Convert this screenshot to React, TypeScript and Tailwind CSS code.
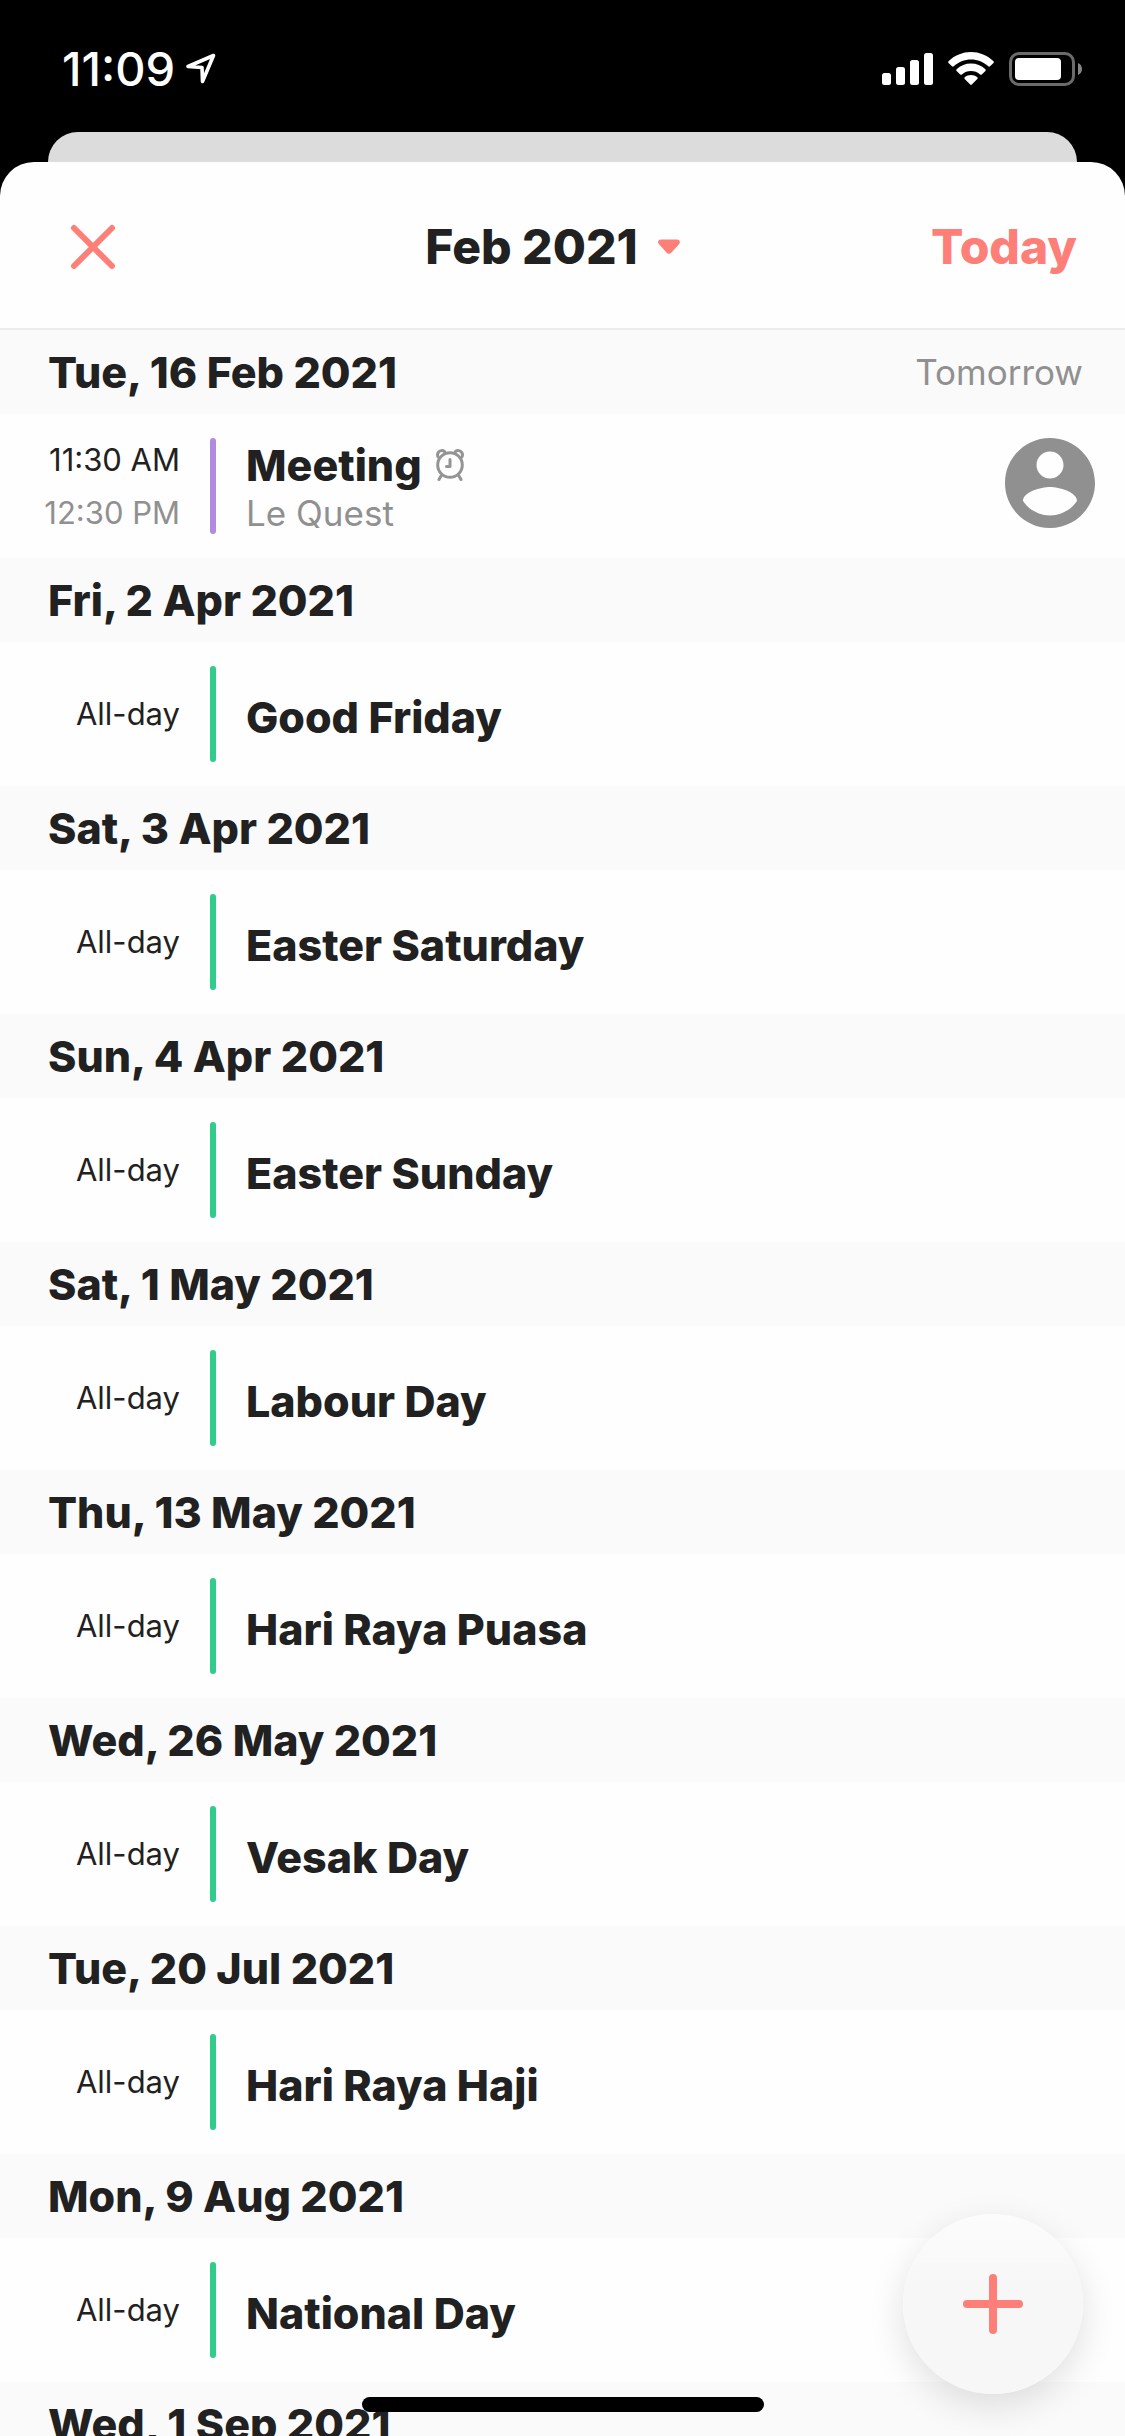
import React from "react";

type Event = {
  date: string;
  note?: string;
  start: string;
  end?: string;
  title: string;
  place?: string;
  alarm?: boolean;
  avatar?: boolean;
};

const events: Event[] = [
  { date: "Tue, 16 Feb 2021", note: "Tomorrow", start: "11:30 AM", end: "12:30 PM", title: "Meeting", place: "Le Quest", alarm: true, avatar: true },
  { date: "Fri, 2 Apr 2021", start: "All-day", title: "Good Friday" },
  { date: "Sat, 3 Apr 2021", start: "All-day", title: "Easter Saturday" },
  { date: "Sun, 4 Apr 2021", start: "All-day", title: "Easter Sunday" },
  { date: "Sat, 1 May 2021", start: "All-day", title: "Labour Day" },
  { date: "Thu, 13 May 2021", start: "All-day", title: "Hari Raya Puasa" },
  { date: "Wed, 26 May 2021", start: "All-day", title: "Vesak Day" },
  { date: "Tue, 20 Jul 2021", start: "All-day", title: "Hari Raya Haji" },
  { date: "Mon, 9 Aug 2021", start: "All-day", title: "National Day" },
];

function StatusBar() {
  return (
    <div className="flex h-[132px] shrink-0 items-center justify-between pt-[6px] pr-[43px] pl-[62px] text-white">
      <div className="flex items-center gap-[10px]">
        <span className="text-[47px] leading-[54px] font-medium">11:09</span>
        <svg aria-label="Location" className="size-[32px]" viewBox="0 0 32 32" fill="none" stroke="currentColor" strokeWidth="3.6" strokeLinejoin="round">
          <path d="M3 13.500L28.500 2.500L17.500 28.500L17 14.500Z" />
        </svg>
      </div>
      <div className="flex items-center gap-[15px]">
        <svg aria-label="Signal" className="h-[34px] w-[51px]" viewBox="0 0 51 34" fill="currentColor">
          <rect x="0" y="21" width="9" height="12" rx="2.5" />
          <rect x="14" y="15" width="9" height="18" rx="2.5" />
          <rect x="28" y="8" width="9" height="25" rx="2.5" />
          <rect x="42" y="1" width="9" height="32" rx="2.5" />
        </svg>
        <svg aria-label="Wi-Fi" className="h-[34px] w-[46px]" viewBox="0 0 46 34" fill="currentColor">
          <path d="M23 0C14.5 0 6.500 3.400 0.500 9.200C0 9.700 0 10.400 0.500 10.900L4 14.300C4.500 14.800 5.200 14.800 5.700 14.300C10.400 9.900 16.500 7.500 23 7.500C29.500 7.500 35.600 9.900 40.300 14.300C40.800 14.800 41.500 14.800 42 14.300L45.500 10.900C46 10.400 46 9.700 45.500 9.200C39.500 3.400 31.500 0 23 0Z" />
          <path d="M23 11.500C17.600 11.500 12.500 13.500 8.600 17.200C8.100 17.700 8.100 18.400 8.600 18.900L12.200 22.400C12.700 22.900 13.400 22.900 13.900 22.400C16.400 20.200 19.600 19 23 19C26.400 19 29.600 20.200 32.100 22.400C32.600 22.900 33.300 22.900 33.800 22.400L37.400 18.900C37.900 18.400 37.900 17.700 37.400 17.200C33.500 13.500 28.400 11.500 23 11.500Z" />
          <path d="M23 23C20.700 23 18.500 23.800 16.700 25.200C16.200 25.700 16.200 26.400 16.700 26.900L22.200 32.500C22.700 33 23.300 33 23.800 32.500L29.300 26.900C29.800 26.400 29.800 25.700 29.300 25.200C27.500 23.800 25.300 23 23 23Z" />
        </svg>
        <svg aria-label="Battery" className="h-[34px] w-[73px]" viewBox="0 0 73 34">
          <rect x="1.500" y="1.500" width="63" height="31" rx="8.500" fill="none" stroke="#6b6b6b" strokeWidth="3" />
          <rect x="6" y="6" width="46" height="22" rx="4" fill="#fff" />
          <path d="M69 11C71.500 12 73 14.300 73 17C73 19.700 71.500 22 69 23Z" fill="#858585" />
        </svg>
      </div>
    </div>
  );
}

function AlarmIcon() {
  return (
    <svg aria-label="Alarm" className="h-[32px] w-[28px]" viewBox="0 0 28 32" fill="none" stroke="#949494" strokeWidth="3" strokeLinecap="round" strokeLinejoin="round">
      <circle cx="14" cy="16" r="12.300" />
      <path d="M14 10.500V17.500H10.500M5 27L3 30.500M23 27L25 30.500" />
      <path d="M2 8C0.500 4.500 3 1.500 6 1.500C7.500 1.500 8.500 2 9 3.500M26 8C27.500 4.500 25 1.500 22 1.500C20.500 1.500 19.500 2 19 3.500" />
    </svg>
  );
}

function Avatar() {
  return (
    <svg aria-label="Attendee" className="mt-6 size-[90px] self-start" viewBox="2 2 20 20" fill="#909090">
      <path d="M12 2C6.480 2 2 6.480 2 12s4.480 10 10 10 10-4.480 10-10S17.520 2 12 2zm0 3c1.660 0 3 1.340 3 3s-1.340 3-3 3-3-1.340-3-3 1.340-3 3-3zm0 14.200c-2.500 0-4.710-1.280-6-3.220.03-1.990 4-3.080 6-3.080 1.990 0 5.970 1.090 6 3.080-1.290 1.940-3.500 3.220-6 3.220z" />
    </svg>
  );
}

function DateHeading({ date, note }: { date: string; note?: string }) {
  return (
    <div className="flex h-[84px] items-center justify-between bg-[#fafafa] pr-[42px] pl-12">
      <h2 className="text-[43px] leading-[50px] font-extrabold">{date}</h2>
      {note && <span className="text-[35px] leading-[42px] text-[#909090]">{note}</span>}
    </div>
  );
}

function EventRow({ event }: { event: Event }) {
  return (
    <div className="flex h-36 items-center pr-[30px]">
      <div className="flex w-[180px] flex-col gap-[17px] text-right text-[31px] leading-[36px]">
        <span>{event.start}</span>
        {event.end && <span className="text-[#909090]">{event.end}</span>}
      </div>
      <div className={`ml-[30px] h-24 w-[6px] rounded-full ${event.end ? "bg-[#b18bdd]" : "bg-[#2fcc8b]"}`} />
      <div className={`ml-[30px] flex grow flex-col ${event.place ? "" : "pt-[6px]"}`}>
        <div className="flex items-center gap-[14px]">
          <h3 className="text-[43px] leading-[54px] font-extrabold">{event.title}</h3>
          {event.alarm && <AlarmIcon />}
        </div>
        {event.place && <p className="text-[35px] leading-[42px] text-[#909090]">{event.place}</p>}
      </div>
      {event.avatar && <Avatar />}
    </div>
  );
}

export default function App() {
  return (
    <div className="relative flex h-screen flex-col overflow-hidden bg-black font-[Inter,sans-serif] text-[#212121]">
      <StatusBar />
      <div className="mx-12 h-[30px] shrink-0 rounded-t-[30px] bg-[#dcdcdc]" />
      <main className="min-h-0 grow overflow-hidden rounded-t-[34px] bg-[#fefefe]">
        <header className="grid h-[168px] grid-cols-[1fr_auto_1fr] items-center border-b-2 border-[#ececec] px-12 pt-[3px]">
          <button aria-label="Close" className="justify-self-start pl-[21px] text-[#fd7f78]">
            <svg className="size-12" viewBox="0 0 48 48" fill="none" stroke="currentColor" strokeWidth="6" strokeLinecap="round">
              <path d="M5 5L43 43M43 5L5 43" />
            </svg>
          </button>
          <button className="flex items-center gap-5 pr-5 text-[48px] leading-[58px] font-extrabold">
            Feb 2021
            <svg className="h-[16px] w-[22px] text-[#fd7f78]" viewBox="0 0 22 16" fill="currentColor">
              <path d="M3 0.500H19C21.800 0.500 22.800 3.500 21 5.300L13.500 13.500C12 15.200 10 15.200 8.500 13.500L1 5.300C-0.800 3.500 0.200 0.500 3 0.500Z" />
            </svg>
          </button>
          <button className="justify-self-end text-[48px] leading-[58px] font-extrabold text-[#fd7f78]">Today</button>
        </header>
        {events.map((event) => (
          <section key={event.date}>
            <DateHeading date={event.date} note={event.note} />
            <EventRow event={event} />
          </section>
        ))}
        <DateHeading date="Wed, 1 Sep 2021" />
      </main>
      <button aria-label="Add event" className="absolute right-[42px] bottom-[42px] flex size-[180px] items-center justify-center rounded-full bg-linear-to-b from-[#fcfcfc] to-[#f7f7f7] to-40% text-[#fd7f78] shadow-[0_12px_36px_rgba(0,0,0,0.12)]">
        <svg className="size-[60px]" viewBox="0 0 60 60" fill="none" stroke="currentColor" strokeWidth="8" strokeLinecap="round">
          <path d="M30 4V56M4 30H56" />
        </svg>
      </button>
      <div className="absolute bottom-6 left-1/2 h-[15px] w-[402px] -translate-x-1/2 rounded-full bg-black" />
    </div>
  );
}
